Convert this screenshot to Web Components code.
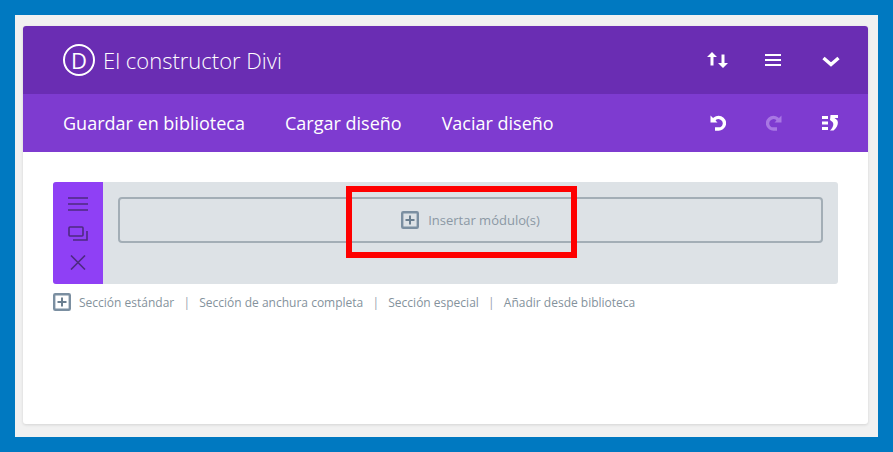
<!DOCTYPE html>
<html lang="es">
<head>
<meta charset="utf-8">
<title>El constructor Divi</title>
<style>
  html, body { margin: 0; height: 100%; }
  body { background: #0079c1; font-family: "Open Sans", sans-serif; overflow: hidden; }
</style>
</head>
<body>
<divi-frame>
  <divi-header></divi-header>
  <divi-toolbar></divi-toolbar>
  <divi-section></divi-section>
  <divi-links></divi-links>
</divi-frame>

<script>
// small helper, every element just sets its shadow html here
function shadowOf(el, html) {
  el.attachShadow({ mode: 'open' }).innerHTML = html;
}

const plusBox = size => `
  <svg width="${size}" height="${size}" viewBox="0 0 18 18" fill="none" style="display:block;flex:none">
    <rect x="1.200" y="1.200" width="15.600" height="15.600" rx="1" stroke="#7b8fa1" stroke-width="2.400"/>
    <path d="M9 4.500v9M4.500 9h9" stroke="#6b7f90" stroke-width="2"/>
  </svg>`;

class DiviFrame extends HTMLElement {
  constructor() {
    super();
    shadowOf(this, `
      <style>
        :host { display: block; box-sizing: border-box; width: 863px; height: 422px; margin: 15px 0 0 15px;
          padding: 11px 10px 13px 8px; background: #f1f1f1; }
        .card { height: 398px; background: #fff; border-radius: 3px; overflow: hidden;
          box-shadow: 0 1px 3px rgba(0,0,0,.12); }
      </style>
      <div class="card"><slot></slot></div>
    `);
  }
}

class DiviHeader extends HTMLElement {
  constructor() {
    super();
    shadowOf(this, `
      <style>
        :host { display: flex; align-items: center; height: 68px; background: #6a2db3; color: #fff;
          padding: 0 28px 0 40px; }
        .logo { box-sizing: border-box; width: 32px; height: 32px; border: 2px solid #fff; border-radius: 50%;
          display: flex; align-items: center; justify-content: center; font-size: 22px; line-height: 1; margin-right: 8px; }
        h1 { margin: 0; font-size: 22px; font-weight: 300; flex: 1; line-height: 1; }
        .icons { display: flex; align-items: center; }
        svg { display: block; }
      </style>
      <span class="logo">D</span>
      <h1>El constructor Divi</h1>
      <div class="icons">
        <svg width="22" height="16" viewBox="0 0 22 16" style="margin-right:37px">
          <path d="M4.500 13.500V5H1L6 0l5 5H7.500v8.500z" fill="#fff"/>
          <path d="M15.500 2.500V11H12l5 5 5-5h-3.500V2.500z" fill="#fff"/>
        </svg>
        <svg width="16" height="12" viewBox="0 0 16 12" fill="none" stroke="#fff" stroke-width="2" style="margin-right:41px">
          <path d="M0 1h16M0 6h16M0 11h16"/>
        </svg>
        <svg width="18" height="11" viewBox="0 0 18 11" fill="none" stroke="#fff" stroke-width="3.400" style="margin-top:3px">
          <path d="M1.500 2L9 8.500 16.500 2"/>
        </svg>
      </div>
    `);
  }
}

class DiviToolbar extends HTMLElement {
  constructor() {
    super();
    shadowOf(this, `
      <style>
        :host { display: flex; align-items: center; height: 58px; background: #7e3bd0; color: #fff;
          padding: 0 30px 0 40px; font-size: 18px; }
        nav { display: flex; gap: 40px; flex: 1; }
        .icons { display: flex; align-items: center; gap: 40px; margin-top: -1px; }
        svg { display: block; }
      </style>
      <nav><span>Guardar en biblioteca</span><span>Cargar diseño</span><span>Vaciar diseño</span></nav>
      <div class="icons">
        <svg width="16" height="16" viewBox="0 0 16 16" fill="none" stroke="#fff" stroke-width="3.400">
          <path d="M3.500 5.500A5.800 5.800 0 1 1 8 14H5"/>
          <path d="M0.500 0.500v7h7z" fill="#fff" stroke="none"/>
        </svg>
        <svg width="16" height="16" viewBox="0 0 16 16" fill="none" stroke="#a877e3" stroke-width="3.400">
          <path d="M12.500 5.500A5.800 5.800 0 1 0 8 14h3"/>
          <path d="M15.500 0.500v7h-7z" fill="#a877e3" stroke="none"/>
        </svg>
        <svg width="16" height="16" viewBox="0 0 16 16" fill="#fff">
          <path d="M0 1h6v3H0zM0 6.500h6v3H0zM0 12h6v3H0z"/>
          <path d="M8.500 0H16v3h-3.500l2.500 2c1.500 1.500 1.500 7-3.500 10.500H8C11.500 12.500 12 8.500 10.500 7L8 5z"/>
        </svg>
      </div>
    `);
  }
}

class DiviSection extends HTMLElement {
  constructor() {
    super();
    shadowOf(this, `
      <style>
        :host { display: flex; position: relative; height: 102px; margin: 30px 30px 0; background: #dde2e6;
          border-radius: 3px; }
        .side { width: 50px; background: #8f40f5; border-radius: 3px 0 0 3px; display: flex; flex-direction: column;
          align-items: center; padding-top: 15px; box-sizing: border-box; }
        svg { display: block; }
        .body { flex: 1; padding: 15px; }
        .insert { box-sizing: border-box; height: 46px; border: 2px solid #a3aeb6; border-radius: 4px;
          display: flex; align-items: center; justify-content: center; gap: 9px;
          color: #8b98a4; font-size: 13px; }
        .mark { position: absolute; box-sizing: border-box; left: 293px; top: 4px; width: 231px; height: 72px;
          border: 6px solid #fe0000; }
      </style>
      <div class="side">
        <svg width="20" height="14" viewBox="0 0 20 14" fill="none" stroke="#4d2a80" stroke-width="1.600">
          <path d="M0 1h20M0 7h20M0 13h20"/>
        </svg>
        <svg width="20" height="15" viewBox="0 0 20 15" fill="none" stroke="#4d2a80" stroke-width="1.600" style="margin-top:15px">
          <rect x="1" y="1" width="14" height="9" rx="1"/>
          <path d="M19 5v9H5"/>
        </svg>
        <svg width="16" height="15" viewBox="0 0 16 15" fill="none" stroke="#4d2a80" stroke-width="1.600" style="margin-top:14px">
          <path d="M1 .500l14 14M15 .500L1 14.500"/>
        </svg>
      </div>
      <div class="body">
        <div class="insert">${plusBox(18)}<span>Insertar módulo(s)</span></div>
      </div>
      <div class="mark"></div>
    `);
  }
}

class DiviLinks extends HTMLElement {
  constructor() {
    super();
    shadowOf(this, `
      <style>
        :host { display: flex; align-items: center; margin: 9px 30px 0; height: 18px; color: #84929c;
          font-size: 12px; }
        i { font-style: normal; color: #97a3ac; width: 25px; text-align: center; }
        span:first-of-type { margin-left: 8px; }
      </style>
      ${plusBox(18)}
      <span>Sección estándar</span><i>|</i>
      <span>Sección de anchura completa</span><i>|</i>
      <span>Sección especial</span><i>|</i>
      <span>Añadir desde biblioteca</span>
    `);
  }
}

customElements.define('divi-frame', DiviFrame);
customElements.define('divi-header', DiviHeader);
customElements.define('divi-toolbar', DiviToolbar);
customElements.define('divi-section', DiviSection);
customElements.define('divi-links', DiviLinks);
</script>
</body>
</html>
